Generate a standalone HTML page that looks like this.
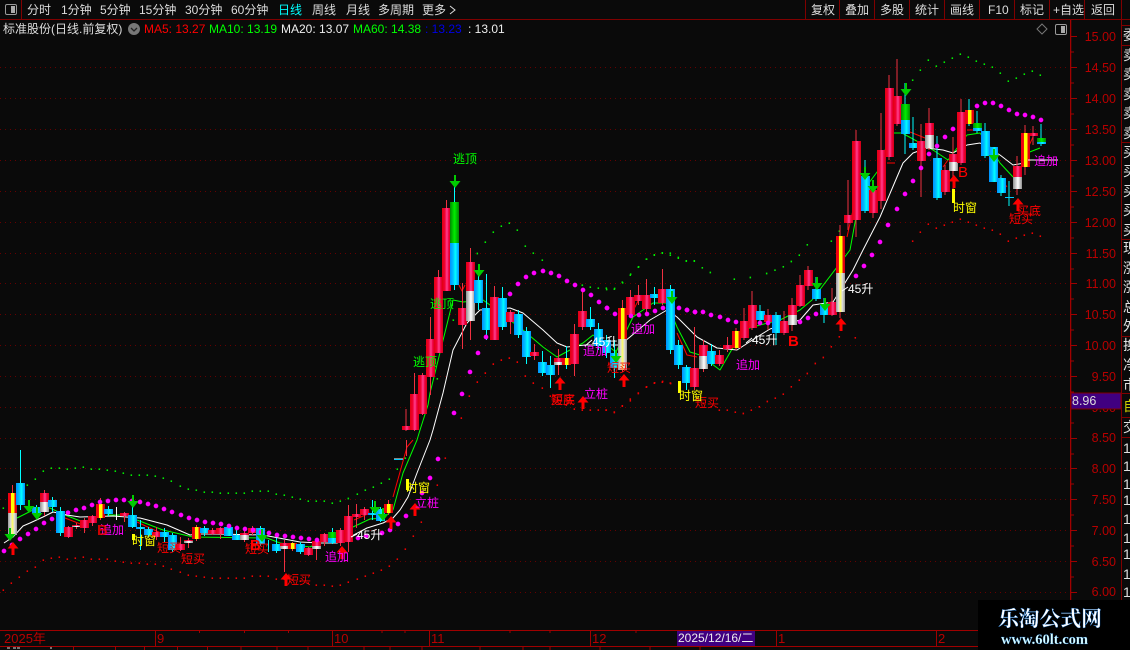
<!DOCTYPE html>
<html><head><meta charset="utf-8"><style>
html,body{margin:0;padding:0;background:#0a0a0a;width:1130px;height:650px;overflow:hidden}
svg{display:block;position:absolute;left:0;top:0}
text{font-family:"Liberation Sans","WenQuanYi Zen Hei","Noto Sans CJK SC",sans-serif;font-size:12px;white-space:pre}
.k rect{width:9px}
.t{fill:#ddd}.lg{fill:#0f0}.ly{fill:#ff0}.lm{fill:#f0f}.lr{fill:#f00}.lw{fill:#fff}
.ax{fill:#b80000;font-size:12.5px;text-anchor:end}
.bx{fill:#b80000;font-size:13px}
.s{fill:#e0e0e0;font-size:14px}
.r{fill:url(#gr)}.b{fill:url(#gb)}.w{fill:url(#gw)}.y{fill:url(#gy)}.q{fill:url(#gq)}.n{fill:url(#gn)}
</style></head><body>
<svg width="1130" height="650" viewBox="0 0 1130 650" xmlns="http://www.w3.org/2000/svg">
<defs>
<linearGradient id="gr"><stop offset="0" stop-color="#e00010"/><stop offset=".3" stop-color="#f00030"/><stop offset=".55" stop-color="#ff4090"/><stop offset=".75" stop-color="#f00040"/><stop offset="1" stop-color="#d00010"/></linearGradient>
<linearGradient id="gb"><stop offset="0" stop-color="#0090ff"/><stop offset=".35" stop-color="#00c0ff"/><stop offset=".6" stop-color="#00ffff"/><stop offset="1" stop-color="#0090ff"/></linearGradient>
<linearGradient id="gw"><stop offset="0" stop-color="#909090"/><stop offset=".55" stop-color="#ffffff"/><stop offset="1" stop-color="#909090"/></linearGradient>
<linearGradient id="gy"><stop offset="0" stop-color="#f00010"/><stop offset=".3" stop-color="#f00010"/><stop offset=".35" stop-color="#ffff00"/><stop offset=".7" stop-color="#ffff00"/><stop offset=".75" stop-color="#f00010"/><stop offset="1" stop-color="#d00010"/></linearGradient>
<linearGradient id="gq"><stop offset="0" stop-color="#999"/><stop offset=".3" stop-color="#ddd"/><stop offset=".5" stop-color="#ffff60"/><stop offset=".7" stop-color="#ddd"/><stop offset="1" stop-color="#999"/></linearGradient>
<linearGradient id="gn"><stop offset="0" stop-color="#008800"/><stop offset=".5" stop-color="#00ee00"/><stop offset="1" stop-color="#008800"/></linearGradient>
<path id="ad" d="M-1 0h2v6h4.500l-5.500 7-5.500-7h4.500z" fill="#0c0"/>
<path id="au" d="M0 0l5.500 6.500h-4v6.500h-3v-6.500h-4z" fill="#f00"/>
</defs>

<!-- grid -->
<path d="M0 67.500H1067M0 98.500H1067M0 129.500H1067M0 160.500H1067M0 191.500H1067M0 222.500H1067M0 253.500H1067M0 283.500H1067M0 314.500H1067M0 345.500H1067M0 376.500H1067M0 407.500H1067M0 438.500H1067M0 468.500H1067M0 499.500H1067M0 530.500H1067M0 561.500H1067M0 592.500H1067" stroke="#600" stroke-width="1" stroke-dasharray="1 4" fill="none"/>

<!-- upper green band -->
<g fill="none" stroke="#0e0" stroke-width="4.500">
<path transform="translate(0,440) scale(.3333)" d="M10 202v5M82 133v5M106 115v5M130 91v5M154 82v5M178 82v5M202 85v5M226 82v5M250 79v5M274 85v5M298 85v5M322 88v5M346 91v5M370 97v5M394 103v5M418 103v5M442 103v5M466 106v5M490 112v5M514 121v5M541 136v5M565 145v5M589 148v5M613 154v5M637 154v5M661 157v5M685 157v5M709 157v5M733 157v5M757 151v5M781 151v5M805 151v5M829 160v5M853 163v5M877 169v5M901 175v5M925 181v5M949 181v5M973 181v5M997 187v5M1021 181v5M1045 173v5"/>
<path transform="translate(350,440) scale(.3333)" d="M22 160v5M46 148v5M70 139v5M94 127v5M118 115v5M142 85v5M166 52v5"/>
<path transform="translate(400,140) scale(.3333)" d="M160 538v5M112 714v5M232 338v5M256 304v5M280 274v5M304 256v5M328 247v5M352 268v5M376 316v5M400 337v5M427 358v5M547 433v5M571 439v5M595 442v5M619 442v5M643 445v5M667 424v5M691 403v5M715 379v5M739 355v5M763 343v5M787 337v5M811 337v5M835 352v5M859 361v5M883 361v5"/>
<path transform="translate(600,240) scale(.3333)" d="M20 146v5M44 143v5M68 126v5M92 100v5M116 78v5M140 55v5M163 42v5M187 36v5M211 43v5M235 50v5M259 60v5M283 60v5M307 81v5M331 95v5M403 115v5M451 110v5M500 98v5M525 88v5M550 78v5M574 62v5M598 43v5M622 12v5"/>
<path transform="translate(830,50) scale(.3333)" d="M4 571v5M28 541v5M248 88v5M271 58v5M295 28v5M319 46v5M343 34v5M367 22v5M391 10v5M415 19v5M439 31v5M463 40v5M487 49v5M511 67v5M535 91v5M559 82v5M583 70v5M607 61v5M631 73v5"/>
</g>
<!-- lower red band -->
<g fill="none" stroke="#e00" stroke-width="4.500">
<path transform="translate(0,440) scale(.3333)" d="M10 448v5M34 427v5M58 409v5M82 391v5M106 379v5M130 358v5M154 352v5M178 349v5M202 355v5M226 352v5M250 349v5M274 355v5M298 355v5M322 355v5M346 361v5M370 364v5M394 367v5M418 367v5M442 370v5M466 370v5M490 376v5M514 385v5M541 394v5M565 403v5M589 406v5M613 409v5M637 412v5M661 412v5M685 412v5M709 412v5M733 412v5M757 406v5M781 406v5M805 406v5M829 415v5M853 415v5M877 418v5M901 421v5M925 427v5M949 433v5M973 433v5M997 436v5M1021 433v5M1045 424v5"/>
<path transform="translate(350,440) scale(.3333)" d="M22 415v5M46 406v5M70 397v5M94 388v5M118 376v5M142 355v5M166 325v5M190 286v5M214 244v5M238 196v5M262 133v5M286 52v5"/>
<path transform="translate(400,140) scale(.3333)" d="M184 832v5M208 766v5M232 724v5M256 697v5M280 670v5M304 658v5M328 652v5M352 664v5M376 706v5M400 727v5M427 742v5M451 766v5M475 778v5M499 793v5M523 805v5M547 808v5M571 808v5M595 808v5M619 808v5M643 814v5M667 796v5M691 775v5M715 757v5M739 739v5M763 727v5M787 724v5M811 727v5"/>
<path transform="translate(600,240) scale(.3333)" d="M18 508v5M43 515v5M67 495v5M91 480v5M115 458v5M140 438v5M164 426v5M188 422v5M212 428v5M310 488v5M334 498v5M358 508v5M382 508v5M406 514v5M430 518v5M454 508v5M478 498v5M502 482v5M526 472v5M550 460v5M574 438v5M598 418v5M622 398v5M646 368v5M670 350v5M694 318v5M718 288v5M766 291v5"/>
<path transform="translate(830,50) scale(.3333)" d="M248 571v5M271 544v5M295 520v5M319 532v5M343 523v5M367 514v5M391 505v5M415 514v5M439 523v5M463 532v5M487 538v5M511 550v5M535 571v5M559 562v5M583 553v5M607 547v5M631 556v5"/>
</g>

<!-- MA lines (behind candles) -->
<g fill="none" stroke-width="1" stroke-linejoin="round">
<path stroke="#f00" d="M65 518L83 525M137 522L165 535M354 520L370 513M393 497L407 447L413 440M459 285L462 291L465 285M640 297L630 317M677 333L687 355L697 357M847 237L853 210L863 203M887 163L895 163M910 132L925 138M943 167L948 160M967 130L980 130M1000 177L1007 187M1027 150L1033 137"/>
<path stroke="#0f0" d="M17 518L37 508L50 508L65 515L83 522M107 515L120 515M137 520L163 530L193 537L267 538L280 543L310 547L330 537M353 527L370 519L383 518L393 510L403 473L417 440L420 430L428 405L430 393L453 300L463 302L483 300L490 305L523 330L543 347L557 357L583 343L593 335L616 352L633 317L653 303L667 303L677 327L690 352L700 355L720 370L743 330L760 325L780 320L800 310L812 300L850 250L860 195L880 168L890 133L902 133L933 150L948 160L967 135L980 133L990 147L1000 163L1013 177M1027 153L1040 148"/>
<path stroke="#fff" d="M4 543L13 537L23 526L30 523L43 517L53 512L67 515L80 517L113 516L140 518L167 525L190 535L200 534L217 534L263 535L300 542L320 543L337 543L350 537L367 528L383 523L393 518L400 510L408 497L417 473L430 440L433 430L443 393L453 350L467 323L480 310L510 308L523 313L543 330L557 343L567 347L585 345L620 345L630 337L650 320L667 310L677 317L697 337L717 348L737 350L757 337L770 329L800 320L813 305L833 302L853 270L863 250L880 217L897 177L903 163L913 153L927 148L943 150L953 153L967 145L980 143L1000 155L1013 165L1030 162"/>
</g>

<!-- wicks -->
<path fill="none" stroke="#f03040" stroke-width="1" d="M12.500 485V535M28.500 505V512M44.500 490V516M68.500 526V538M76.500 523V529M84.500 518V533M92.500 515V526M100.500 498V520M124.500 512V522M156.500 527V540M180.500 537V551M188.500 538V548M196.500 525V541M212.500 528V535M220.500 527V539M244.500 530V542M252.500 526V535M284.500 540V572M292.500 542V551M308.500 547V556M316.500 540V560M324.500 533V546M340.500 528V546M348.500 505V552M356.500 504V528M364.500 507V520M388.500 500V515M406.500 440V456M406 409V431M414.500 373V431M422.500 373V415M430.500 317V395M438.500 270V353M446.500 200V291M462.500 283V349M470.500 248V340M494.500 286V340M510.500 310V334M534.500 344V360M558.500 349V375M574.500 324V376M582.500 290V330M622.500 300V372M630.500 290V316M638.500 285V305M646.500 279V312M662.500 269V305M694.500 327V390M703.500 340V372M719.500 350V366M727.500 337V352M736 328V350M744 308V340M752 291V330M768 309V330M784 311V335M792 298V331M800 275V307M808 266V290M832 288V316M840 225V318M848 180V230M856 130V237M873 188V218M881 113V209M889 75V160M897 59V126M921 124V197M929 108V150M945 165V195M953 137V190M961 99V165M1017 156V195M1025 125V175M1033 126V145"/>
<path fill="none" stroke="#0ff" stroke-width="1" d="M20.500 450V510M36.500 505V517M52.500 497V512M60.500 507V536M108.500 506V516M132.500 495V528M140.500 520V550M148.500 527V537M164.500 528V542M172.500 533V552M204.500 526V536M236.500 529V540M260.500 526V546M268.500 540V552M276.500 538V553M300.500 542V554M332.500 528V544M372.500 500V520M380.500 507V522M454.500 186V290M478.500 274V310M486.500 274V340M502.500 287V330M518.500 310V338M526.500 327V364M542.500 351V376M550.500 356V388M566.500 346V369M590.500 307V330M598.500 323V350M606.500 335V358M614.500 340V378M654.500 287V305M670.500 285V354M678.500 340V369M686.500 365V390M711.500 344V366M760 305V325M776 312V345M816 277V301M824 298V323M865 160V213M905 83V154M913 117V150M937 136V200M969 99V126M977 111V133M985 123V158M1001 175V196M1009 181V206M1041 124V146"/>
<path d="M116.500 507V520M394 459H403" stroke="#fff" fill="none" stroke-width="1"/>
<path d="M394 459.500H403M1005 197.500H1014" stroke="#0cf" fill="none"/>

<!-- candles -->
<g class="k">
<rect class="y" x="8" y="493" height="20"/><rect class="q" x="8" y="513" height="22"/>
<rect class="b" x="16" y="483" height="22"/>
<rect class="b" x="32" y="507" height="7"/>
<rect class="r" x="40" y="493" height="9"/><rect class="w" x="40" y="502" height="10"/>
<rect class="b" x="48" y="500" height="7"/>
<rect class="b" x="56" y="511" height="22"/>
<rect class="r" x="64" y="527" height="10"/>
<rect class="r" x="72" y="525" height="1"/><rect class="w" x="72" y="526" height="1"/>
<rect class="r" x="80" y="520" height="8"/>
<rect class="r" x="88" y="516" height="7"/>
<rect class="y" x="96" y="504" height="14"/>
<rect class="b" x="104" y="509" height="5"/>
<rect class="r" x="120" y="513" height="3"/>
<rect class="b" x="128" y="515" height="12"/>
<rect class="b" x="136" y="527" height="2"/>
<rect class="b" x="144" y="529" height="6"/>
<rect class="r" x="152" y="532" height="5"/>
<rect class="b" x="160" y="532" height="5"/>
<rect class="b" x="168" y="535" height="15"/>
<rect class="r" x="176" y="544" height="6"/>
<rect class="r" x="184" y="540" height="1"/><rect class="w" x="184" y="541" height="2"/>
<rect class="y" x="192" y="527" height="12"/>
<rect class="b" x="200" y="528" height="5"/>
<rect class="r" x="208" y="530" height="4"/>
<rect class="r" x="216" y="528" height="6"/>
<rect class="b" x="224" y="527" height="9"/>
<rect class="b" x="232" y="535" height="5"/>
<rect class="r" x="240" y="533" height="2"/><rect class="w" x="240" y="535" height="5"/>
<rect class="r" x="248" y="528" height="5"/>
<rect class="b" x="256" y="528" height="16"/>
<rect class="b" x="272" y="544" height="7"/>
<rect class="r" x="280" y="543" height="3"/><rect class="w" x="280" y="546" height="3"/>
<rect class="y" x="288" y="543" height="6"/>
<rect class="b" x="296" y="544" height="8"/>
<rect class="r" x="304" y="548" height="7"/>
<rect class="r" x="312" y="541" height="5"/><rect class="w" x="312" y="546" height="3"/>
<rect class="r" x="320" y="534" height="8"/>
<rect class="n" x="328" y="532" height="6"/><rect class="b" x="328" y="538" height="5"/>
<rect class="r" x="336" y="530" height="13"/>
<rect class="r" x="344" y="516" height="26"/>
<rect class="r" x="352" y="514" height="3"/>
<rect class="r" x="360" y="509" height="6"/>
<rect class="b" x="368" y="513" height="2"/>
<rect class="b" x="376" y="509" height="12"/>
<rect class="y" x="384" y="504" height="9"/>
<rect class="r" x="402" y="426" height="4"/>
<rect class="r" x="410" y="394" height="36"/>
<rect class="r" x="418" y="375" height="39"/>
<rect class="r" x="426" y="339" height="38"/>
<rect class="r" x="434" y="277" height="76"/>
<rect class="r" x="442" y="208" height="83"/>
<rect class="n" x="450" y="202" height="41"/><rect class="b" x="450" y="243" height="42"/>
<rect class="r" x="458" y="308" height="17"/>
<rect class="r" x="466" y="262" height="29"/><rect class="w" x="466" y="291" height="30"/>
<rect class="b" x="474" y="280" height="23"/>
<rect class="b" x="482" y="308" height="22"/>
<rect class="r" x="490" y="297" height="43"/>
<rect class="b" x="498" y="298" height="29"/>
<rect class="r" x="506" y="312" height="10"/>
<rect class="b" x="514" y="314" height="21"/>
<rect class="b" x="522" y="331" height="26"/>
<rect class="r" x="530" y="352" height="4"/>
<rect class="b" x="538" y="362" height="11"/>
<rect class="b" x="546" y="365" height="10"/>
<rect class="r" x="554" y="358" height="4"/><rect class="w" x="554" y="362" height="3"/>
<rect class="y" x="562" y="358" height="7"/>
<rect class="r" x="570" y="334" height="30"/>
<rect class="r" x="578" y="311" height="16"/>
<rect class="b" x="586" y="319" height="8"/>
<rect class="b" x="594" y="329" height="17"/>
<rect class="b" x="602" y="340" height="13"/>
<rect class="b" x="610" y="353" height="15"/>
<rect class="y" x="618" y="308" height="31"/><rect class="q" x="618" y="339" height="31"/>
<rect class="r" x="626" y="297" height="18"/>
<rect class="r" x="634" y="295" height="6"/>
<rect class="r" x="642" y="295" height="14"/>
<rect class="b" x="650" y="294" height="4"/>
<rect class="r" x="658" y="289" height="14"/>
<rect class="b" x="666" y="289" height="61"/>
<rect class="b" x="674" y="345" height="20"/>
<rect class="b" x="682" y="367" height="16"/>
<rect class="r" x="690" y="368" height="19"/>
<rect class="r" x="699" y="345" height="11"/><rect class="w" x="699" y="356" height="13"/>
<rect class="b" x="707" y="351" height="13"/>
<rect class="r" x="715" y="355" height="9"/>
<rect class="r" x="723" y="345" height="4"/>
<rect class="y" x="732" y="331" height="17"/>
<rect class="r" x="740" y="321" height="17"/>
<rect class="r" x="748" y="305" height="23"/>
<rect class="b" x="756" y="311" height="9"/>
<rect class="r" x="764" y="315" height="7"/>
<rect class="b" x="772" y="315" height="18"/>
<rect class="r" x="780" y="321" height="12"/>
<rect class="r" x="788" y="305" height="10"/><rect class="w" x="788" y="315" height="10"/>
<rect class="r" x="796" y="285" height="21"/>
<rect class="r" x="804" y="270" height="16"/>
<rect class="b" x="812" y="289" height="10"/>
<rect class="b" x="820" y="305" height="10"/>
<rect class="r" x="828" y="302" height="13"/>
<rect class="y" x="836" y="236" height="37"/><rect class="q" x="836" y="273" height="39"/>
<rect class="r" x="844" y="215" height="8"/>
<rect class="r" x="852" y="141" height="79"/>
<rect class="b" x="861" y="176" height="35"/>
<rect class="r" x="869" y="190" height="23"/>
<rect class="r" x="877" y="150" height="51"/>
<rect class="r" x="885" y="88" height="69"/>
<rect class="r" x="893" y="96" height="28"/>
<rect class="n" x="901" y="104" height="16"/><rect class="b" x="901" y="120" height="14"/>
<rect class="b" x="909" y="143" height="5"/>
<rect class="r" x="917" y="141" height="20"/>
<rect class="r" x="925" y="123" height="12"/><rect class="w" x="925" y="135" height="13"/>
<rect class="b" x="933" y="158" height="40"/>
<rect class="r" x="941" y="170" height="22"/>
<rect class="r" x="949" y="154" height="8"/><rect class="w" x="949" y="162" height="9"/>
<rect class="r" x="957" y="112" height="51"/>
<rect class="y" x="965" y="110" height="14"/>
<rect class="n" x="973" y="123" height="5"/><rect class="b" x="973" y="128" height="3"/>
<rect class="b" x="981" y="131" height="25"/>
<rect class="b" x="989" y="147" height="35"/>
<rect class="b" x="997" y="178" height="15"/>
<rect class="r" x="1013" y="166" height="11"/><rect class="w" x="1013" y="177" height="12"/>
<rect class="y" x="1021" y="133" height="34"/>
<rect class="r" x="1029" y="133" height="3"/>
<rect class="n" x="1037" y="138" height="4"/><rect class="b" x="1037" y="142" height="2"/>
</g>

<!-- magenta dots -->
<g fill="none" stroke="#f0f" stroke-width="14" stroke-linecap="round">
<path transform="translate(0,440) scale(.3333)" d="M12 333h.1M36 315h.1M60 297h.1M84 282h.1M108 267h.1M132 249h.1M156 237h.1M204 218h.1M228 210h.1M252 204h.1M276 195h.1M300 186h.1M324 183h.1M348 180h.1M372 180h.1M396 183h.1M420 186h.1M444 192h.1M468 198h.1M492 207h.1M516 216h.1M543 225h.1M567 234h.1M591 240h.1M615 246h.1M639 249h.1M663 252h.1M687 258h.1M711 264h.1M735 267h.1M759 270h.1M783 276h.1M807 279h.1M831 285h.1M855 288h.1M879 291h.1M903 294h.1M927 297h.1M951 300h.1"/>
<path transform="translate(350,440) scale(.3333)" d="M24 294h.1M48 288h.1M96 279h.1M120 270h.1M144 252h.1M168 228h.1M216 159h.1M240 114h.1M264 57h.1"/>
<path transform="translate(400,140) scale(.3333)" d="M162 819h.1M186 762h.1M210 696h.1M234 639h.1M258 591h.1M330 462h.1M354 432h.1M378 411h.1M402 399h.1M429 393h.1M453 399h.1M477 408h.1M501 423h.1M525 435h.1M549 450h.1M573 465h.1M597 486h.1M621 504h.1M645 522h.1M693 528h.1M717 525h.1M741 522h.1M765 513h.1M789 504h.1M837 504h.1M861 510h.1M885 516h.1"/>
<path transform="translate(600,240) scale(.3333)" d="M21 204h.1M261 210h.1M285 216h.1M309 216h.1M333 225h.1M360 231h.1M384 240h.1M408 246h.1M480 249h.1M504 249h.1M600 246h.1M624 234h.1M648 222h.1M768 108h.1M792 78h.1M816 45h.1"/>
<path transform="translate(830,50) scale(.3333)" d="M150 576h.1M174 525h.1M201 477h.1M225 432h.1M249 393h.1M273 354h.1M297 312h.1M321 288h.1M345 261h.1M369 237h.1M441 168h.1M465 159h.1M489 159h.1M513 168h.1M537 180h.1M561 192h.1M585 195h.1M609 201h.1M633 210h.1"/>
</g>

<!-- arrows -->
<g>
<use href="#ad" x="10" y="528"/><use href="#ad" x="29" y="500"/><use href="#ad" x="37" y="507"/><use href="#ad" x="133" y="495"/><use href="#ad" x="262" y="529"/><use href="#ad" x="375" y="501"/><use href="#ad" x="383" y="508"/><use href="#ad" x="455" y="175"/><use href="#ad" x="479" y="264"/><use href="#ad" x="616" y="350"/><use href="#ad" x="672" y="291"/><use href="#ad" x="817" y="277"/><use href="#ad" x="825" y="298"/><use href="#ad" x="865" y="167"/><use href="#ad" x="873" y="180"/><use href="#ad" x="906" y="83"/><use href="#ad" x="994" y="149"/>
<use href="#au" x="13" y="542"/><use href="#au" x="286" y="573"/><use href="#au" x="342" y="546"/><use href="#au" x="391" y="516"/><use href="#au" x="415" y="503"/><use href="#au" x="560" y="377"/><use href="#au" x="583" y="396"/><use href="#au" x="624" y="374"/><use href="#au" x="841" y="318"/><use href="#au" x="954" y="175"/><use href="#au" x="1018" y="198"/>
</g>
<path d="M406 479h3v11h-3zM678 381h3v12h-3zM952 189h3v14h-3zM132 534h3v6h-3z" fill="#ff0"/>

<!-- signal labels -->
<g>
<text class="lg" x="453" y="163">逃顶</text><text class="lg" x="430" y="308">逃顶</text><text class="lg" x="413" y="366">逃顶</text>
<text class="lr" x="157" y="552">短买</text><text class="lr" x="181" y="563">短买</text><text class="lr" x="245" y="553">短买</text><text class="lr" x="287" y="584">短买</text><text class="lr" x="551" y="404">短买</text><text class="lr" x="551" y="404">买底</text><text class="lr" x="607" y="372">短买</text><text class="lr" x="695" y="407">短买</text><text class="lr" x="1009" y="223">短买</text><text class="lr" x="1017" y="215">买底</text>
<text class="ly" x="132" y="545">时窗</text><text class="ly" x="406" y="492">时窗</text><text class="ly" x="679" y="400">时窗</text><text class="ly" x="953" y="212">时窗</text>
<text class="lm" x="100" y="534">追加</text><text class="lm" x="325" y="561">追加</text><text class="lm" x="583" y="355">追加</text><text class="lm" x="631" y="333">追加</text><text class="lm" x="736" y="369">追加</text>
<text class="lm" x="415" y="507">立桩</text><text class="lm" x="584" y="398">立桩</text>
<text class="lw" x="357" y="539">45升</text><text class="lw" x="592" y="346">45升</text><text class="lw" x="752" y="344">45升</text><text class="lw" x="848" y="293">45升</text>
<path d="M1028 160H1058" stroke="#fff" fill="none"/>
<text class="lm" x="1034" y="165">追加</text>
<text x="97" y="535" style="font-size:15px;font-weight:bold;fill:#f00" opacity=".8">B</text>
<text x="250" y="550" style="font-size:15px;font-weight:bold;fill:#f00">B</text>
<text x="788" y="346" style="font-size:15px;font-weight:bold;fill:#f00">B</text>
<text x="958" y="177" style="font-size:15px;fill:#f00">B</text>
<path d="M351 537l6-3M585 346l7-6M746 343l6-5M842 291l6-4" stroke="#fff" fill="none"/>
</g>

<!-- axis -->
<rect x="1070" y="20" width="1.300" height="610" fill="#a00000"/>
<rect x="1121" y="20" width="1" height="630" fill="#800000"/>
<path stroke="#a00000" fill="none" d="M1071 36.500h6M1071 52h3M1071 67.500h6M1071 83h3M1071 98.500h6M1071 114h3M1071 129.500h6M1071 145h3M1071 160.500h6M1071 176h3M1071 191.500h6M1071 207h3M1071 222.500h6M1071 238h3M1071 253.500h6M1071 269h3M1071 283.500h6M1071 299h3M1071 314.500h6M1071 330h3M1071 345.500h6M1071 361h3M1071 376.500h6M1071 392h3M1071 423h3M1071 438.500h6M1071 454h3M1071 468.500h6M1071 484h3M1071 499.500h6M1071 515h3M1071 530.500h6M1071 546h3M1071 561.500h6M1071 577h3M1071 592.500h6M1071 608h3"/>
<g>
<text class="ax" x="1116" y="41">15.00</text><text class="ax" x="1116" y="72">14.50</text><text class="ax" x="1116" y="103">14.00</text><text class="ax" x="1116" y="134">13.50</text><text class="ax" x="1116" y="165">13.00</text><text class="ax" x="1116" y="196">12.50</text><text class="ax" x="1116" y="227">12.00</text><text class="ax" x="1116" y="258">11.50</text><text class="ax" x="1116" y="288">11.00</text><text class="ax" x="1116" y="319">10.50</text><text class="ax" x="1116" y="350">10.00</text><text class="ax" x="1116" y="381">9.50</text><text class="ax" x="1116" y="412">9.00</text><text class="ax" x="1116" y="442">8.50</text><text class="ax" x="1116" y="473">8.00</text><text class="ax" x="1116" y="504">7.50</text><text class="ax" x="1116" y="535">7.00</text><text class="ax" x="1116" y="566">6.50</text><text class="ax" x="1116" y="596">6.00</text>
</g>
<rect x="1071" y="393" width="50" height="16" fill="#400080" stroke="#800000" stroke-width="1"/>
<text x="1072" y="405" style="fill:#ddd;font-size:12.500px">8.96</text>

<!-- right side panel -->
<path stroke="#800000" fill="none" d="M1122 25.500H1130M1122 45.500H1130M1122 142.500H1130M1122 239.500H1130M1122 336.500H1130M1122 393.500H1130M1122 417.500H1130M1122 437.500H1130"/>
<g>
<text class="s" x="1123" y="40">委</text>
<text class="s" x="1123" y="60">卖</text><text class="s" x="1123" y="79">卖</text><text class="s" x="1123" y="99">卖</text><text class="s" x="1123" y="118">卖</text><text class="s" x="1123" y="138">卖</text>
<text class="s" x="1123" y="157">买</text><text class="s" x="1123" y="176">买</text><text class="s" x="1123" y="196">买</text><text class="s" x="1123" y="215">买</text><text class="s" x="1123" y="235">买</text>
<text class="s" x="1123" y="253">现</text><text class="s" x="1123" y="273">涨</text><text class="s" x="1123" y="292">涨</text><text class="s" x="1123" y="312">总</text><text class="s" x="1123" y="331">外</text>
<text class="s" x="1123" y="350">换</text><text class="s" x="1123" y="370">净</text><text class="s" x="1123" y="390">市</text>
<text class="s" x="1123" y="411" style="fill:#cc0">自</text>
<text class="s" x="1123" y="432">交</text>
<text class="s" x="1123" y="453">1</text><text class="s" x="1123" y="471">1</text><text class="s" x="1123" y="489">1</text><text class="s" x="1123" y="505">1</text><text class="s" x="1123" y="524">1</text><text class="s" x="1123" y="543">1</text><text class="s" x="1123" y="559">1</text><text class="s" x="1123" y="579">1</text><text class="s" x="1123" y="597">1</text>
</g>

<!-- bottom axis -->
<rect x="0" y="630" width="1070" height="1" fill="#a00000"/>
<rect x="0" y="646" width="1130" height="1" fill="#a00000"/>
<path stroke="#a00000" fill="none" d="M155.500 631V646M332.500 631V646M429.500 631V646M590.500 631V646M199.500 631v2M244.500 631v2M288.500 631v2M382 631v2M405 631v2M510 631v2M550 631v2M636 631v2M73.500 646v4M115.500 646v4M144.500 646v4M177.500 646v4M207.500 646v4M241 646v4M277 646v4M308 646v4M364 646v4M390 646v4M422 646v4M480 646v4M523 646v4M550 646v4M600 646v4M650 646v4M700 646v4M776.500 631V646M936.500 631V646"/>
<text class="bx" x="4" y="643">2025年</text><text class="bx" x="157" y="643">9</text><text class="bx" x="334" y="643">10</text><text class="bx" x="431" y="643">11</text><text class="bx" x="592" y="643">12</text><text class="bx" x="778" y="643">1</text><text class="bx" x="938" y="643">2</text>
<rect x="677" y="631" width="78" height="15" fill="#400080"/>
<text x="678" y="642" style="fill:#eee;font-size:12px">2025/12/16/二</text>
<path d="M7 648h3M13 648h3M17 648h3M50 648h2" stroke="#ddd" fill="none"/>

<!-- top toolbars -->
<rect x="0" y="0" width="1130" height="19" fill="#0a0a0a"/>
<rect x="0" y="19" width="1130" height="1" fill="#800000"/>
<rect x="21" y="0" width="1" height="19" fill="#800000"/>
<rect x="5.500" y="4.500" width="11" height="10" rx="1.500" fill="none" stroke="#999"/><rect x="11" y="6" width="4" height="7" fill="#aaa"/>
<g class="t">
<text x="27" y="14">分时</text><text x="61" y="14">1分钟</text><text x="100" y="14">5分钟</text><text x="139" y="14">15分钟</text><text x="185" y="14">30分钟</text><text x="231" y="14">60分钟</text>
<text x="278" y="14" style="fill:#0ff">日线</text><text x="312" y="14">周线</text><text x="346" y="14">月线</text><text x="378" y="14">多周期</text><text x="422" y="14">更多</text>
</g>
<path d="M450 6l5 4-5 4" stroke="#ddd" fill="none"/>
<path stroke="#800000" fill="none" d="M805.500 0V19M839.500 0V19M874.500 0V19M909.500 0V19M944.500 0V19M979.500 0V19M1014.500 0V19M1049.500 0V19M1084.500 0V19M1121.500 0V19"/>
<g class="t">
<text x="811" y="14">复权</text><text x="845" y="14">叠加</text><text x="880" y="14">多股</text><text x="915" y="14">统计</text><text x="950" y="14">画线</text><text x="988" y="14">F10</text><text x="1020" y="14">标记</text><text x="1053" y="14">+自选</text><text x="1091" y="14">返回</text>
</g>

<!-- info line -->
<text x="3" y="33" class="t">标准股份(日线.前复权)</text>
<circle cx="134" cy="29" r="6" fill="#777"/><path d="M131 28l3 3 3-3" stroke="#222" fill="none" stroke-width="1.300"/>
<text x="144" y="33" style="fill:#f00">MA5: 13.27</text>
<text x="209" y="33" style="fill:#0f0">MA10: 13.19</text>
<text x="281" y="33" style="fill:#eee">MA20: 13.07</text>
<text x="353" y="33" style="fill:#0f0">MA60: 14.38</text>
<text x="425" y="33" style="fill:#0000e6">: 13.23</text>
<text x="468" y="33" style="fill:#eee">: 13.01</text>
<path d="M1042 24l5 5-5 5-5-5z" fill="none" stroke="#777"/>
<rect x="1055.500" y="24.500" width="11" height="10" rx="1.500" fill="none" stroke="#999"/><rect x="1061" y="26" width="4" height="7" fill="#aaa"/>

<!-- watermark -->
<rect x="978" y="600" width="152" height="50" fill="#000"/>
<text x="998" y="626" style="font-family:'Noto Serif CJK SC','Liberation Serif',serif;font-weight:bold;font-size:20.800px;fill:#fff;stroke:#06c;stroke-width:.3px">乐淘公式网</text>
<text x="1001" y="644" style="font-family:'Liberation Serif',serif;font-weight:bold;font-size:14.500px;fill:#dff;stroke:#06c;stroke-width:.2px">www.60lt.com</text>
</svg>
</body></html>
